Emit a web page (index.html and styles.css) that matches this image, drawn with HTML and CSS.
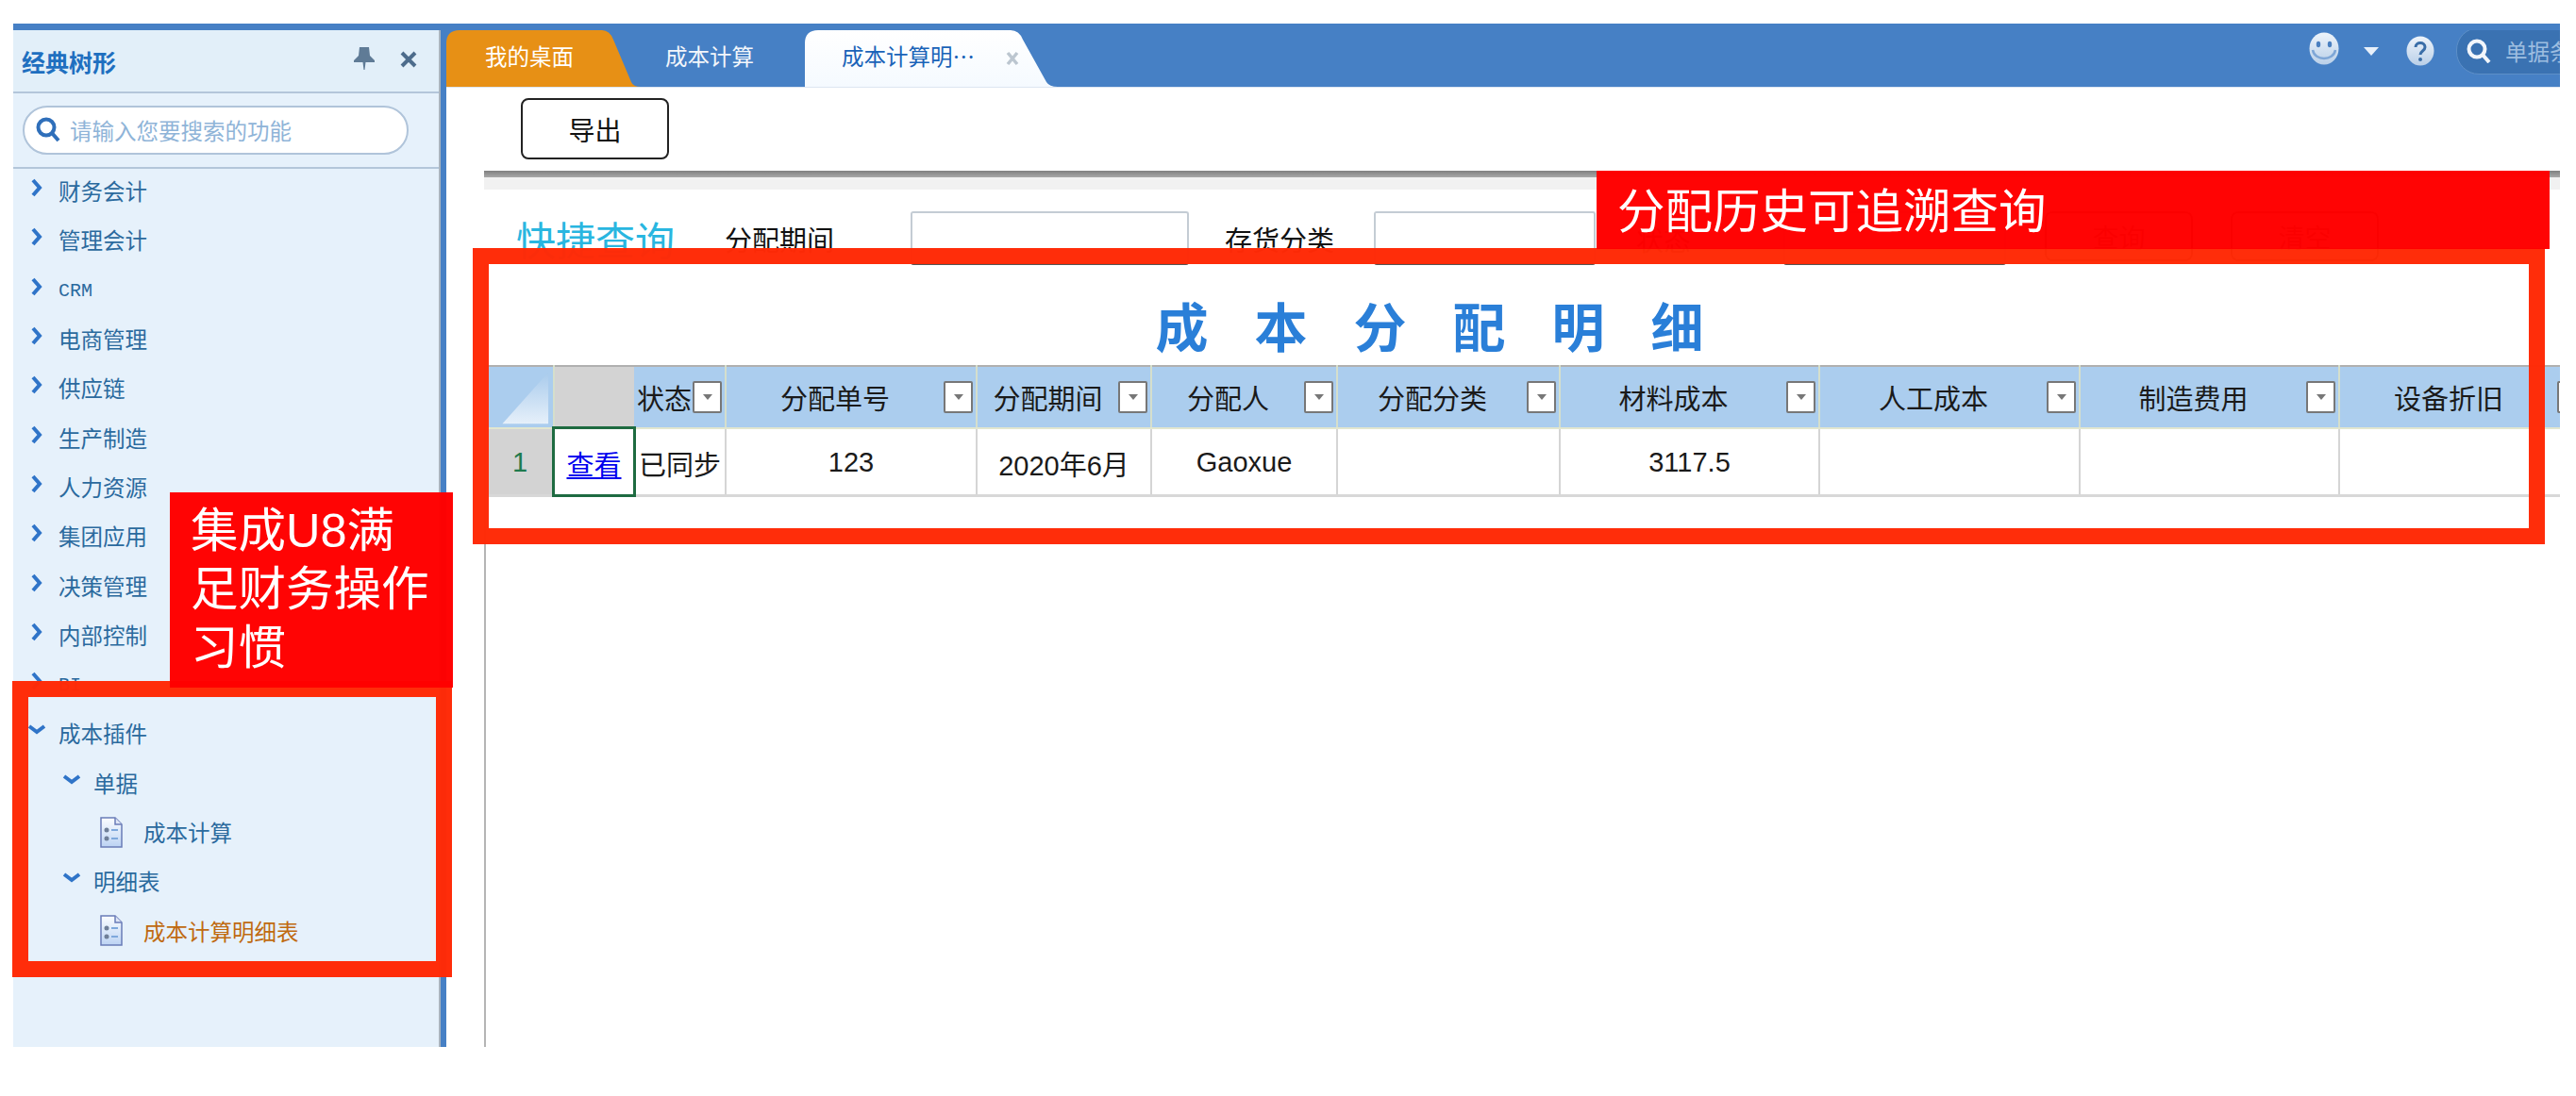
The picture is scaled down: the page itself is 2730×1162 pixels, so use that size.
FILE: index.html
```html
<!DOCTYPE html>
<html lang="zh-CN">
<head>
  <meta charset="UTF-8">
  <title>成本分配明细</title>
  <link rel="stylesheet" href="styles.css">
</head>
<body>
  <svg class="svg-defs" width="0" height="0">
    <defs>
      <linearGradient id="docFill" x1="0" y1="0" x2="0" y2="1"><stop offset="0" stop-color="#fbfdff"/><stop offset="1" stop-color="#bcd3f3"/></linearGradient>
      <linearGradient id="cornerFill" x1="0" y1="0" x2="0" y2="1"><stop offset="0" stop-color="#a9cbec"/><stop offset="1" stop-color="#e6f0fa"/></linearGradient>
      <linearGradient id="ballFill" x1="0" y1="0" x2="0" y2="1"><stop offset="0" stop-color="#eef4fb"/><stop offset="1" stop-color="#b9cfe8"/></linearGradient>
    </defs>
  </svg>

  <div class="app">
    <aside class="sidebar">
      <div class="side-head">
        <span class="side-title">经典树形</span>
        <svg class="pin-icon" viewBox="0 0 22 24"><path d="M6 0h10l1 9 5 5v2H12.5l-1 8h-1l-1-8H0v-2l5-5z"/></svg>
        <svg class="close-icon" viewBox="0 0 18 18"><path d="M2 2l14 14M16 2L2 16"/></svg>
      </div>
      <div class="side-search">
        <div class="search-box">
          <svg class="search-icon" viewBox="0 0 26 28"><circle cx="11" cy="11" r="8.5"/><path d="M17 17l7 8"/></svg>
          <span>请输入您要搜索的功能</span>
        </div>
      </div>
      <ul class="menu">
        <li class="menu-item"><svg class="arrow" viewBox="0 0 20 20"><path d="M6 2l7 8-7 8"/></svg><span>财务会计</span></li>
        <li class="menu-item"><svg class="arrow" viewBox="0 0 20 20"><path d="M6 2l7 8-7 8"/></svg><span>管理会计</span></li>
        <li class="menu-item"><svg class="arrow" viewBox="0 0 20 20"><path d="M6 2l7 8-7 8"/></svg><span class="latin">CRM</span></li>
        <li class="menu-item"><svg class="arrow" viewBox="0 0 20 20"><path d="M6 2l7 8-7 8"/></svg><span>电商管理</span></li>
        <li class="menu-item"><svg class="arrow" viewBox="0 0 20 20"><path d="M6 2l7 8-7 8"/></svg><span>供应链</span></li>
        <li class="menu-item"><svg class="arrow" viewBox="0 0 20 20"><path d="M6 2l7 8-7 8"/></svg><span>生产制造</span></li>
        <li class="menu-item"><svg class="arrow" viewBox="0 0 20 20"><path d="M6 2l7 8-7 8"/></svg><span>人力资源</span></li>
        <li class="menu-item"><svg class="arrow" viewBox="0 0 20 20"><path d="M6 2l7 8-7 8"/></svg><span>集团应用</span></li>
        <li class="menu-item"><svg class="arrow" viewBox="0 0 20 20"><path d="M6 2l7 8-7 8"/></svg><span>决策管理</span></li>
        <li class="menu-item"><svg class="arrow" viewBox="0 0 20 20"><path d="M6 2l7 8-7 8"/></svg><span>内部控制</span></li>
        <li class="menu-item"><svg class="arrow" viewBox="0 0 20 20"><path d="M6 2l7 8-7 8"/></svg><span class="latin">BI</span></li>
        <li class="menu-item"><svg class="arrow" viewBox="0 0 20 20"><path d="M2 6l8 6 8-6"/></svg><span>成本插件</span></li>
        <li class="menu-item level-2"><svg class="arrow" viewBox="0 0 20 20"><path d="M2 6l8 6 8-6"/></svg><span>单据</span></li>
        <li class="menu-item level-3">
          <svg class="doc-icon" viewBox="0 0 24 33"><path class="doc-page" d="M1 1h15l7 7v24H1z"/><path class="doc-fold" d="M16 1v7h7"/><circle cx="7" cy="14" r="2.5"/><circle cx="7" cy="23" r="2.5"/><path class="doc-line" d="M12 14h7M12 23h7"/></svg>
          <span>成本计算</span>
        </li>
        <li class="menu-item level-2"><svg class="arrow" viewBox="0 0 20 20"><path d="M2 6l8 6 8-6"/></svg><span>明细表</span></li>
        <li class="menu-item level-3 current">
          <svg class="doc-icon" viewBox="0 0 24 33"><path class="doc-page" d="M1 1h15l7 7v24H1z"/><path class="doc-fold" d="M16 1v7h7"/><circle cx="7" cy="14" r="2.5"/><circle cx="7" cy="23" r="2.5"/><path class="doc-line" d="M12 14h7M12 23h7"/></svg>
          <span>成本计算明细表</span>
        </li>
      </ul>
    </aside>

    <main class="main">
      <div class="tabs">
        <div class="tab tab-home">我的桌面</div>
        <div class="tab tab-plain">成本计算</div>
        <div class="tab tab-active">
          <span>成本计算明⋯</span>
          <svg class="tab-close" viewBox="0 0 14 16"><path d="M2 2l10 12M12 2L2 14"/></svg>
        </div>
        <div class="tools">
          <svg class="smile" viewBox="0 0 32 35">
            <ellipse cx="16" cy="17.5" rx="15.5" ry="17" fill="url(#ballFill)"/>
            <ellipse cx="10" cy="13" rx="2.2" ry="3.2" fill="#4a7fc0"/>
            <ellipse cx="22" cy="13" rx="2.2" ry="3.2" fill="#4a7fc0"/>
            <path d="M4 19c2 12 22 12 24 0" fill="none" stroke="#7ea6d6" stroke-width="2.5"/>
          </svg>
          <span class="caret"></span>
          <svg class="help" viewBox="0 0 30 32">
            <ellipse cx="15" cy="16" rx="14.5" ry="15.5" fill="url(#ballFill)"/>
            <path d="M10 12c0-6 10-6 10 0 0 4-5 4-5 8" fill="none" stroke="#3a6ea8" stroke-width="3"/>
            <circle cx="15" cy="25" r="2" fill="#3a6ea8"/>
          </svg>
          <div class="top-search">
            <svg class="top-search-icon" viewBox="0 0 26 26"><circle cx="11" cy="11" r="8.5"/><path d="M17 17l7 8"/></svg>
            <span>单据条码</span>
          </div>
        </div>
      </div>

      <div class="toolbar">
        <button class="btn-export">导出</button>
      </div>

      <div class="content">
        <div class="divider"></div>
        <div class="filters">
          <span class="filters-title">快捷查询</span>
          <span class="filter-label label-period">分配期间</span>
          <span class="filter-input input-period"></span>
          <span class="filter-label label-stock">存货分类</span>
          <span class="filter-input input-stock"></span>
          <span class="filter-label label-state">状态</span>
          <span class="filter-input input-state"></span>
          <button class="filter-btn">查询</button>
          <button class="filter-btn">清空</button>
        </div>

        <div class="report">
          <h1 class="report-title">成本分配明细</h1>

          <table class="grid">
            <colgroup>
              <col class="col-no"><col class="col-action"><col class="col-state"><col class="col-bill">
              <col class="col-period"><col class="col-user"><col class="col-type"><col class="col-money">
              <col class="col-money2"><col class="col-money"><col class="col-last">
            </colgroup>
            <thead>
              <tr>
                <th class="corner"><svg viewBox="0 0 70 62"><path d="M18 60L68 4v56z" fill="url(#cornerFill)"/></svg></th>
                <th class="gray-head"></th>
                <th><div class="head-cell head-left"><span>状态</span><i class="filter-box"></i></div></th>
                <th><div class="head-cell"><span>分配单号</span><i class="filter-box"></i></div></th>
                <th><div class="head-cell"><span>分配期间</span><i class="filter-box"></i></div></th>
                <th><div class="head-cell"><span>分配人</span><i class="filter-box"></i></div></th>
                <th><div class="head-cell"><span>分配分类</span><i class="filter-box"></i></div></th>
                <th><div class="head-cell"><span>材料成本</span><i class="filter-box"></i></div></th>
                <th><div class="head-cell"><span>人工成本</span><i class="filter-box"></i></div></th>
                <th><div class="head-cell"><span>制造费用</span><i class="filter-box"></i></div></th>
                <th><div class="head-cell"><span>设备折旧</span><i class="filter-box"></i></div></th>
              </tr>
            </thead>
            <tbody>
              <tr>
                <td class="row-no">1</td>
                <td class="row-action"><a href="#">查看</a></td>
                <td class="cell-left">已同步</td>
                <td>123</td>
                <td>2020年6月</td>
                <td>Gaoxue</td>
                <td></td>
                <td>3117.5</td>
                <td></td>
                <td></td>
                <td></td>
              </tr>
            </tbody>
          </table>
        </div>
      </div>
    </main>
  </div>

  <!-- annotations pasted over the screenshot -->
  <div class="mark-frame frame-menu"></div>
  <div class="mark-frame frame-grid"></div>
  <div class="mark-note note-menu">集成U8满<br>足财务操作<br>习惯</div>
  <div class="mark-note note-grid">分配历史可追溯查询</div>
</body>
</html>
```

FILE: styles.css
```css
* {
  box-sizing: border-box;
}
body {
  margin: 0;
  position: relative;
  height: 1162px;
  background: #fff;
  font-family: "Liberation Sans", "Noto Sans CJK SC", sans-serif;
  overflow: hidden;
}
.svg-defs {
  display: block;
  height: 0;
}
.app {
  display: flex;
  width: 2699px;
  height: 1085px;
  margin: 25px 0 0 14px;
  border-top: 7px solid #4680c5;
}

/* left tree */
.sidebar {
  width: 453px;
  flex-shrink: 0;
  background: #e6f1fb;
  border-right: 2px solid #a9b4bf;
  overflow: hidden;
}
.side-head {
  display: flex;
  align-items: center;
  height: 67px;
  padding: 0 23px 0 9px;
  background: #e2eff9;
  border-bottom: 2px solid #b3c6da;
}
.side-title {
  font-size: 25px;
  font-weight: bold;
  color: #1f6fc0;
  flex: 1;
}
.pin-icon {
  width: 22px;
  height: 24px;
  margin: -6px 27px 0 0;
  fill: #5f7b96;
}
.close-icon {
  width: 18px;
  height: 18px;
  margin-top: -4px;
  fill: none;
  stroke: #4d6c8c;
  stroke-width: 4;
}
.side-search {
  height: 80px;
  padding: 13px 0 0 10px;
  border-bottom: 2px solid #b3c6da;
}
.search-box {
  display: flex;
  align-items: center;
  width: 409px;
  height: 52px;
  padding-left: 12px;
  background: #fff;
  border: 2px solid #b0c4da;
  border-radius: 26px;
  font-size: 23.5px;
  color: #8fb4d8;
}
.search-icon {
  width: 26px;
  height: 28px;
  margin-right: 10px;
  fill: none;
  stroke: #2f6fba;
  stroke-width: 4;
}
.menu {
  list-style: none;
  margin: -3px 0 0;
  padding: 0;
}
.menu-item {
  display: flex;
  align-items: center;
  height: 52.3px;
  padding-left: 15px;
  font-size: 23.5px;
  color: #2b6a9e;
  white-space: nowrap;
}
.arrow {
  width: 20px;
  height: 20px;
  margin: -6px 13px 0 0;
  fill: none;
  stroke: #2f74c8;
  stroke-width: 4;
}
.latin {
  font-family: "Liberation Mono", monospace;
  font-size: 20px;
  padding-top: 3px;
}
.level-2 {
  padding-left: 52px;
}
.level-3 {
  padding-left: 92px;
}
.current {
  color: #c06a10;
}
.doc-icon {
  width: 24px;
  height: 33px;
  margin-right: 22px;
  fill: #6f7f98;
}
.doc-page {
  fill: url(#docFill);
  stroke: #6a7cb8;
  stroke-width: 1.5;
}
.doc-fold {
  fill: #dfe6f6;
  stroke: #6a7cb8;
  stroke-width: 1.5;
}
.doc-line {
  fill: none;
  stroke: #7ea8dc;
  stroke-width: 2;
}

/* right side */
.main {
  flex: 1;
  min-width: 0;
  border-left: 6px solid #4680c5;
  display: flex;
  flex-direction: column;
  overflow: hidden;
}
.tabs {
  display: flex;
  flex-shrink: 0;
  height: 61px;
  background: #4680c5;
  border-bottom: 1px solid #dde6f2;
  font-size: 23.5px;
}
.tab {
  display: flex;
  align-items: center;
  flex-shrink: 0;
  height: 60px;
  padding-bottom: 6px;
  white-space: nowrap;
}
.tab-home {
  width: 206px;
  padding-left: 41px;
  background: #e79015;
  color: #fff;
  clip-path: path("M0 60V14Q0 0 14 0H165Q173 0 177 10L196 55Q198 60 206 60Z");
}
.tab-plain {
  width: 174px;
  padding-left: 26px;
  color: #f2f6fb;
}
.tab-active {
  width: 268px;
  padding-left: 39px;
  background: linear-gradient(#fff, #f5faff);
  color: #1a63b8;
  clip-path: path("M0 60V14Q0 0 14 0H218Q227 0 231 10L256 55Q259 60 268 60Z");
}
.tab-close {
  width: 14px;
  height: 16px;
  margin: 6px 0 0 33px;
  fill: none;
  stroke: #bcc6d0;
  stroke-width: 3.5;
}
.tools {
  display: flex;
  align-items: center;
  flex-shrink: 0;
  height: 50px;
  margin: -3px -30px 0 auto;
}
.smile {
  width: 32px;
  height: 35px;
  margin: -5px 26px 0 0;
}
.caret {
  width: 0;
  height: 0;
  margin-right: 29px;
  border-left: 8px solid transparent;
  border-right: 8px solid transparent;
  border-top: 9px solid #e8f0fa;
}
.help {
  width: 30px;
  height: 32px;
  margin-right: 23px;
}
.top-search {
  display: flex;
  align-items: center;
  width: 140px;
  height: 50px;
  padding-left: 10px;
  background: #3a72b2;
  border: 1px solid #5d8fc8;
  border-radius: 24px 0 0 24px;
  color: #9dbde0;
  white-space: nowrap;
}
.top-search-icon {
  width: 26px;
  height: 26px;
  flex-shrink: 0;
  margin-right: 15px;
  fill: none;
  stroke: #f2f6fb;
  stroke-width: 4;
}
.toolbar {
  flex-shrink: 0;
  height: 88px;
  padding: 11px 0 0 79px;
}
.btn-export {
  width: 157px;
  height: 65px;
  background: #fff;
  border: 2px solid #222;
  border-radius: 8px;
  font-family: inherit;
  font-size: 28px;
  color: #111;
}
.content {
  flex: 1;
  min-height: 0;
  margin-left: 40px;
  display: flex;
  flex-direction: column;
  overflow: hidden;
}
.divider {
  flex-shrink: 0;
  height: 20px;
  background: linear-gradient(#808080 0, #a8a8a8 7px, #f1f1f1 7px);
}
.filters {
  display: flex;
  flex-shrink: 0;
  align-items: center;
  height: 57px;
  margin-top: 23px;
  padding-left: 34px;
  white-space: nowrap;
}
.filters-title {
  width: 167px;
  margin-right: 54px;
  font-size: 42px;
  color: #29b6e0;
}
.filter-label {
  font-size: 29px;
  color: #111;
}
.label-period {
  margin-right: 81px;
}
.label-stock {
  margin-right: 42px;
}
.label-state {
  margin-right: 98px;
}
.filter-input {
  height: 57px;
  flex-shrink: 0;
  background: #fff;
  border: 2px solid #c4ccd4;
  border-bottom-color: #555;
  border-radius: 3px;
}
.input-period {
  width: 295px;
  margin-right: 38px;
}
.input-stock {
  width: 235px;
  margin-right: 43px;
}
.input-state {
  width: 236px;
  margin-right: 41px;
}
.filter-btn {
  width: 157px;
  height: 53px;
  margin-right: 40px;
  align-self: flex-start;
  background: #fff;
  border: 2px solid #333;
  border-radius: 8px;
  font-family: inherit;
  font-size: 28px;
  color: #111;
}
.report {
  flex: 1;
  border-left: 2px solid #b5b5b5;
}
.report-title {
  width: 2000px;
  height: 106px;
  margin: 0;
  padding-top: 35px;
  text-align: center;
  font-size: 56px;
  line-height: 66px;
  font-weight: bold;
  letter-spacing: 49px;
  text-indent: 49px;
  color: #2a7fd8;
  white-space: nowrap;
}
.grid {
  table-layout: fixed;
  width: 2230px;
  border-collapse: collapse;
  font-size: 29px;
  color: #1a1a1a;
}
.col-no { width: 72px; }
.col-action { width: 85px; }
.col-state { width: 97px; }
.col-bill { width: 266px; }
.col-period { width: 185px; }
.col-user { width: 197px; }
.col-type { width: 236px; }
.col-money { width: 275px; }
.col-money2 { width: 276px; }
.col-last { width: 266px; }
.grid th {
  height: 66px;
  padding: 0;
  background: #abcdee;
  border-top: 2px solid #b0b0b0;
  border-bottom: 2px solid #e2e6cf;
  border-right: 2px solid #d5dfcc;
  font-weight: normal;
}
.grid .corner {
  border-right: 2px solid #d5dfcc;
  line-height: 0;
}
.corner svg {
  width: 68px;
  height: 62px;
  display: block;
}
.grid .gray-head {
  background: #d3d3d3;
  border-right: 0;
}
.head-cell {
  display: flex;
  align-items: center;
}
.head-cell span {
  flex: 1;
  text-align: center;
  white-space: nowrap;
}
.head-left span {
  padding-left: 3px;
  text-align: left;
}
.filter-box {
  position: relative;
  width: 31px;
  height: 34px;
  flex-shrink: 0;
  margin-right: 3px;
  background: #fff;
  border: 2px solid #777;
  border-radius: 2px;
}
.filter-box::after {
  content: "";
  position: absolute;
  left: 9px;
  top: 12px;
  border-left: 5px solid transparent;
  border-right: 5px solid transparent;
  border-top: 6px solid #777;
}
.grid td {
  height: 71px;
  padding: 3px 0 0;
  text-align: center;
  border-right: 2px solid #d5d5d5;
  border-bottom: 3px solid #d8d8d8;
  white-space: nowrap;
}
.grid .row-no {
  background: #d3d3d3;
  color: #1f7a4d;
  border-right: 0;
}
.grid .row-action {
  outline: 3px solid #1e6b41;
  outline-offset: -1px;
  border-right: 0;
}
.row-action a {
  color: #0000ee;
}
.grid .cell-left {
  padding-left: 5px;
  text-align: left;
}

/* red annotations */
.mark-frame {
  position: absolute;
  border: 17px solid rgba(255, 42, 6, 0.985);
}
.frame-menu {
  left: 13px;
  top: 722px;
  width: 466px;
  height: 314px;
}
.frame-grid {
  left: 501px;
  top: 263px;
  width: 2196px;
  height: 314px;
}
.mark-note {
  position: absolute;
  background: rgba(255, 0, 0, 0.985);
  color: #fff;
  font-size: 50.5px;
  white-space: nowrap;
}
.note-menu {
  left: 180px;
  top: 522px;
  width: 300px;
  height: 207px;
  padding: 10px 0 0 22px;
  line-height: 62px;
}
.note-grid {
  left: 1692px;
  top: 181px;
  width: 1010px;
  height: 83px;
  padding-left: 22px;
  line-height: 88px;
}
```
